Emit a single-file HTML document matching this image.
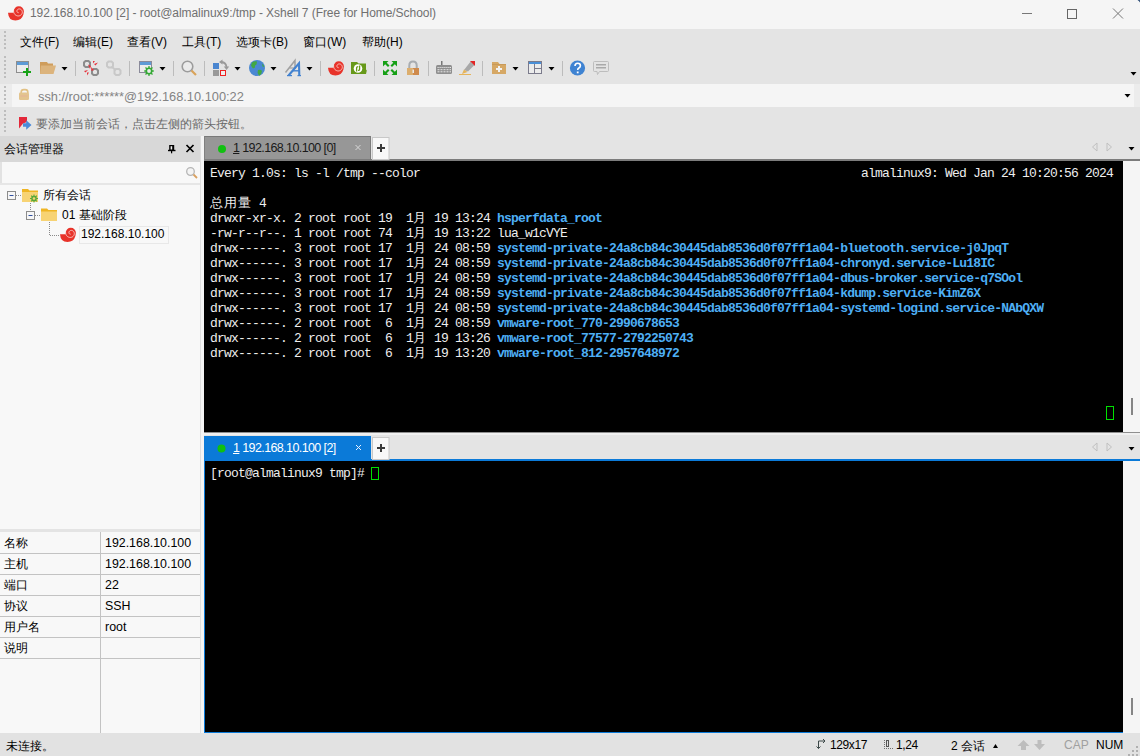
<!DOCTYPE html>
<html><head><meta charset="utf-8">
<style>
*{box-sizing:border-box;margin:0;padding:0}
html,body{width:1140px;height:756px;overflow:hidden;background:#ececec;font-family:"Liberation Sans",sans-serif;font-size:12px;color:#000}
.a{position:absolute}
.ui{font-family:"Liberation Sans",sans-serif;white-space:pre}
.t{font-family:"Liberation Mono",monospace;white-space:pre;color:#eeeeee;font-size:13px;letter-spacing:-0.8px;line-height:15px;margin-top:1px}
.b{color:#4eaff5;font-weight:bold}
.w{display:inline-block;width:14px}
.sep{position:absolute;top:62px;width:1px;height:13px;background:#b4b4b4}
.dd{position:absolute;top:67px;width:0;height:0;border-left:3px solid transparent;border-right:3px solid transparent;border-top:3px solid #000}
</style></head><body>
<svg width="0" height="0" style="position:absolute"><defs><symbol id="sn" viewBox="0 0 16 16">
<path d="M0,7.7 Q0.5,15.5 7.5,15.5 Q13.8,15.3 15.4,9.5 L15.9,6.3 A5.1,5.1 0 0 0 5.7,6.3 L5.5,7.7 Z" fill="#e8332a"/>
<path d="M5.67,5.28 L5.61,5.99 L5.64,6.68 L5.77,7.36 L5.99,8.00 L6.28,8.60 L6.65,9.14 L7.08,9.63 L7.56,10.05 L8.09,10.39 L8.66,10.65 L9.24,10.83 L9.83,10.93 L10.42,10.95 L11.00,10.89 L11.56,10.76 L12.08,10.55 L12.57,10.28 L13.00,9.95 L13.38,9.57 L13.70,9.16 L13.96,8.71 L14.14,8.24 L14.26,7.76 L14.32,7.27 L14.30,6.79 L14.23,6.33 L14.09,5.89 L13.90,5.48 L13.66,5.11 L13.38,4.79 L13.06,4.51 L12.72,4.28 L12.35,4.11 L11.98,3.99 L11.60,3.93 L11.23,3.91 L10.86,3.95 L10.52,4.04 L10.20,4.17 L9.90,4.34 L9.65,4.54 L9.43,4.77 L9.24,5.02 L9.10,5.28 L9.01,5.56 L8.95,5.83 L8.93,6.10 L8.95,6.37 L9.01,6.61 L9.10,6.84 L9.22,7.05 L9.36,7.22 L9.51,7.37 L9.68,7.49 L9.86,7.58 L10.04,7.64 L10.22,7.67 L10.40,7.67 L10.56,7.64 L10.71,7.60" fill="none" stroke="#fbe3e0" stroke-width="0.8"/>
</symbol></defs></svg>

<!-- title bar -->
<div class="a" style="left:0;top:0;width:1140px;height:29px;background:#f5f5f5"></div>
<div class="a ui" style="left:30px;top:6px;font-size:12px;letter-spacing:-0.05px;color:#707070">192.168.10.100 [2] - root@almalinux9:/tmp - Xshell 7 (Free for Home/School)</div>

<!-- menu + toolbar -->
<div class="a" style="left:0;top:29px;width:1140px;height:55px;background:#e4e4e4"></div>
<div class="a ui" style="left:20px;top:34px;font-size:12px">文件(F)</div>
<div class="a ui" style="left:73px;top:34px;font-size:12px">编辑(E)</div>
<div class="a ui" style="left:127px;top:34px;font-size:12px">查看(V)</div>
<div class="a ui" style="left:182px;top:34px;font-size:12px">工具(T)</div>
<div class="a ui" style="left:236px;top:34px;font-size:12px">选项卡(B)</div>
<div class="a ui" style="left:303px;top:34px;font-size:12px">窗口(W)</div>
<div class="a ui" style="left:362px;top:34px;font-size:12px">帮助(H)</div>

<!-- address bar -->
<div class="a" style="left:12px;top:84px;width:1122px;height:23px;background:#f5f5f5"></div>
<div class="a ui" style="left:38px;top:89px;font-size:12.8px;color:#838383">ssh://root:******@192.168.10.100:22</div>

<!-- tip bar -->
<div class="a" style="left:0;top:107px;width:1140px;height:29px;background:#e4e4e4"></div>
<div class="a ui" style="left:36px;top:116px;font-size:12px;color:#6a6a6a">要添加当前会话，点击左侧的箭头按钮。</div>

<!-- toolbar icons -->
<svg class="a" style="left:0;top:29px" width="620" height="107" viewBox="0 29 620 107">
<g fill="#bdbdbd">
<rect x="4" y="31" width="2" height="2"/><rect x="4" y="35" width="2" height="2"/><rect x="4" y="39" width="2" height="2"/><rect x="4" y="43" width="2" height="2"/><rect x="4" y="47" width="2" height="2"/>
<rect x="4" y="56" width="2" height="2"/><rect x="4" y="60" width="2" height="2"/><rect x="4" y="64" width="2" height="2"/><rect x="4" y="68" width="2" height="2"/><rect x="4" y="72" width="2" height="2"/><rect x="4" y="76" width="2" height="2"/>
<rect x="4" y="86" width="2" height="2"/><rect x="4" y="90" width="2" height="2"/><rect x="4" y="94" width="2" height="2"/><rect x="4" y="98" width="2" height="2"/><rect x="4" y="102" width="2" height="2"/>
<rect x="4" y="110" width="2" height="2"/><rect x="4" y="114" width="2" height="2"/><rect x="4" y="118" width="2" height="2"/><rect x="4" y="122" width="2" height="2"/><rect x="4" y="126" width="2" height="2"/><rect x="4" y="130" width="2" height="2"/>
</g>
<!-- separators -->
<g stroke="#bcbcbc" stroke-width="1">
<line x1="75.5" y1="61" x2="75.5" y2="76"/><line x1="129.5" y1="61" x2="129.5" y2="76"/><line x1="173.5" y1="61" x2="173.5" y2="76"/>
<line x1="204.5" y1="61" x2="204.5" y2="76"/><line x1="320.5" y1="61" x2="320.5" y2="76"/><line x1="374.5" y1="61" x2="374.5" y2="76"/>
<line x1="428.5" y1="61" x2="428.5" y2="76"/><line x1="482.5" y1="61" x2="482.5" y2="76"/><line x1="562.5" y1="61" x2="562.5" y2="76"/>
</g>
<!-- dropdown arrows -->
<g fill="#000">
<polygon points="61.5,67 67.5,67 64.5,70.5"/><polygon points="159.5,67 165.5,67 162.5,70.5"/><polygon points="234.5,67 240.5,67 237.5,70.5"/>
<polygon points="270.5,67 276.5,67 273.5,70.5"/><polygon points="306.5,67 312.5,67 309.5,70.5"/><polygon points="512.5,67 518.5,67 515.5,70.5"/>
<polygon points="548.5,67 554.5,67 551.5,70.5"/>
</g>
<!-- 1 new session -->
<rect x="16.5" y="61.5" width="12" height="11" fill="#ececec" stroke="#8e8e8e"/>
<rect x="17" y="62" width="11" height="3" fill="#5e9bd6"/>
<rect x="23" y="71" width="8" height="2" fill="#17a317"/><rect x="26" y="68" width="2" height="8" fill="#17a317"/>
<!-- 2 open folder -->
<path d="M40,62 h7 l1,1.5 h5 v10.5 h-13 z" fill="#cf9d5c"/>
<path d="M41,65.5 h15 l-2.5,8.5 h-13.5 z" fill="#dcb47d"/>
<!-- 5 disconnect -->
<g fill="none" stroke="#8c8c8c" stroke-width="2">
<path d="M85.5,61 h3 l1.5,1.5 v3 l-1.5,1.5 h-3 l-1.5,-1.5 v-3 z"/>
<path d="M93.5,69 h3 l1.5,1.5 v3 l-1.5,1.5 h-3 l-1.5,-1.5 v-3 z"/>
</g>
<g fill="#e5323c">
<path d="M88,64.5 l3,1.5 l-1,3 z"/><path d="M91,67 l3,3 l-2.5,1 z"/>
<path d="M93,61 l2,0 l-2,2.5 z"/><path d="M94,64 l4,-1.5 l-2.5,3 z"/>
<path d="M84,71 l4,-1 l-2.5,2.5 z"/><path d="M87,72.5 l2,0 l-2,3 z"/>
</g>
<!-- 6 reconnect disabled -->
<g fill="none" stroke="#c8c8c8" stroke-width="2">
<path d="M108.5,61.5 h3 l1.5,1.5 v3 l-1.5,1.5 h-3 l-1.5,-1.5 v-3 z"/>
<path d="M116,69 h3 l1.5,1.5 v3 l-1.5,1.5 h-3 l-1.5,-1.5 v-3 z"/>
<line x1="112" y1="67" x2="115.5" y2="70"/>
</g>
<!-- 8 properties -->
<rect x="139.5" y="61.5" width="12" height="11" fill="#ececec" stroke="#8a8a9a"/>
<rect x="140" y="62" width="11" height="3" fill="#5e9bd6"/>
<g transform="translate(149,71)"><path d="M3.53,-0.70 L4.97,-0.59 L4.97,0.59 L3.53,0.70 L2.99,2.00 L3.93,3.10 L3.10,3.93 L2.00,2.99 L0.70,3.53 L0.59,4.97 L-0.59,4.97 L-0.70,3.53 L-2.00,2.99 L-3.10,3.93 L-3.93,3.10 L-2.99,2.00 L-3.53,0.70 L-4.97,0.59 L-4.97,-0.59 L-3.53,-0.70 L-2.99,-2.00 L-3.93,-3.10 L-3.10,-3.93 L-2.00,-2.99 L-0.70,-3.53 L-0.59,-4.97 L0.59,-4.97 L0.70,-3.53 L2.00,-2.99 L3.10,-3.93 L3.93,-3.10 L2.99,-2.00Z" fill="#34a834"/><circle r="1.9" fill="#ececec"/></g>
<!-- 11 search -->
<circle cx="187.5" cy="66.5" r="5.3" fill="#ebebeb" stroke="#9c9c9c" stroke-width="1.6"/>
<line x1="191.5" y1="70.5" x2="196" y2="75" stroke="#d9a35a" stroke-width="2.2"/>
<!-- 13 transfer -->
<rect x="213" y="63" width="6" height="6" fill="#4a86d0"/>
<rect x="213" y="70" width="6" height="6" fill="#999"/>
<rect x="220.5" y="70.5" width="5" height="5" fill="#eee" stroke="#e22" stroke-width="1"/>
<path d="M221.5,62 Q226,62.5 226.5,67" fill="none" stroke="#9a9a9a" stroke-width="1.8"/>
<polygon points="219,62 222.5,59.5 222.5,64.5" fill="#9a9a9a"/><polygon points="223.8,66.5 229.2,66.5 226.5,70" fill="#9a9a9a"/>
<!-- 15 globe -->
<circle cx="257" cy="68" r="8" fill="#4a88d2"/>
<path d="M252,62.5 q3,-2 5,-1 l-0.5,3 q-2,0.5 -1.5,3 l-2,1 q-1.5,-2 -2,-3 z" fill="#43a843"/>
<path d="M258,70 q3,-1 4,1 q0,3 -3,5 q-1,-3 -1.5,-3 z" fill="#43a843"/>
<path d="M262,63.5 q2,1.5 2.5,3.5 l-2,-0.5 z" fill="#43a843"/>
<!-- 17 font -->
<path d="M285.5,72.5 L295,60.5 V69" fill="none" stroke="#a0a0a0" stroke-width="1.5"/>
<line x1="289.5" y1="68" x2="295" y2="68" stroke="#a0a0a0" stroke-width="1.2"/>
<path d="M288.5,75.5 L299,63.3 L299.3,75.5" fill="none" stroke="#4282d0" stroke-width="2.1"/>
<line x1="292.5" y1="70.8" x2="299" y2="70.8" stroke="#4282d0" stroke-width="1.4"/>
<line x1="287" y1="75.6" x2="292" y2="75.6" stroke="#4282d0" stroke-width="1.2"/><line x1="297.5" y1="75.6" x2="301" y2="75.6" stroke="#4282d0" stroke-width="1.2"/>
<!-- 20 snail -->
<use href="#sn" x="328" y="60" width="16" height="16"/>
<!-- 21 xftp -->
<path d="M351,62 h6 l1.5,1.5 h7.5 v7 l1,-1 l-1,4.5 h-15 z" fill="#67991a"/>
<circle cx="358" cy="68.5" r="4.3" fill="#fff"/>
<path d="M356.6,71.5 V67.8 Q356.6,66.6 358.2,66.6 M359.6,65.5 V69.2 Q359.6,70.4 358,70.4" fill="none" stroke="#67991a" stroke-width="1.3"/>
<!-- 23 fullscreen -->
<g fill="#16a016">
<path d="M383,61 h5.5 l-1.8,1.8 l2.8,2.8 l-1.5,1.5 l-2.8,-2.8 l-2.2,2.2 z"/>
<path d="M397,61 h-5.5 l1.8,1.8 l-2.8,2.8 l1.5,1.5 l2.8,-2.8 l2.2,2.2 z"/>
<path d="M383,75 h5.5 l-1.8,-1.8 l2.8,-2.8 l-1.5,-1.5 l-2.8,2.8 l-2.2,-2.2 z"/>
<path d="M397,75 h-5.5 l1.8,-1.8 l-2.8,-2.8 l1.5,-1.5 l2.8,2.8 l2.2,-2.2 z"/>
</g>
<!-- 24 lock -->
<path d="M409.3,68.5 v-3 q0,-4 3.7,-4 q3.7,0 3.7,4 v3" fill="none" stroke="#a8acb0" stroke-width="2"/>
<rect x="407" y="68" width="6" height="7" fill="#dcae6e"/><rect x="413" y="68" width="6" height="7" fill="#cf8a4c"/>
<rect x="412.5" y="69.5" width="1.5" height="3.5" fill="#e8e8e8"/>
<!-- 26 keyboard -->
<rect x="436" y="65" width="16" height="9" rx="1.5" fill="#8e8e8e"/>
<rect x="441" y="61" width="1.5" height="4" fill="#777"/>
<g fill="#e8e8e8">
<rect x="437.5" y="67" width="1.2" height="1"/><rect x="439.5" y="67" width="1.2" height="1"/><rect x="441.5" y="67" width="1.2" height="1"/><rect x="443.5" y="67" width="1.2" height="1"/><rect x="445.5" y="67" width="1.2" height="1"/><rect x="447.5" y="67" width="1.2" height="1"/><rect x="449.5" y="67" width="1.5" height="1"/>
<rect x="437.5" y="69.2" width="2" height="1"/><rect x="440.5" y="69.2" width="2" height="1"/><rect x="443.5" y="69.2" width="2" height="1"/><rect x="446.5" y="69.2" width="2" height="1"/><rect x="449.5" y="69.2" width="1.5" height="1"/>
<rect x="437.5" y="71.3" width="2" height="1"/><rect x="440.5" y="71.3" width="2" height="1"/><rect x="443.5" y="71.3" width="2" height="1"/><rect x="446.5" y="71.3" width="2" height="1"/><rect x="449.5" y="71.3" width="1.5" height="1"/>
</g>
<!-- 27 highlighter -->
<path d="M464,70 l7,-9 l4,3.5 l-7,7 z" fill="#a8a8a8"/>
<path d="M470,61 h5 v5 z" fill="#e32424"/>
<path d="M464,69.5 l3.5,2.5 l-5.5,2 z" fill="#e6b45a"/>
<rect x="459" y="74" width="12" height="1" fill="#e6b45a"/>
<!-- 29 folder plus -->
<path d="M492,62 h6 l1.5,2 h6.5 v10 h-14 z" fill="#d6a865"/>
<rect x="492" y="64" width="14" height="1" fill="#c99a58"/>
<rect x="496" y="68" width="6" height="2" fill="#f2f2f2"/><rect x="498" y="66" width="2" height="6" fill="#f2f2f2"/>
<!-- 31 layout -->
<rect x="528.5" y="61.5" width="13" height="12" fill="#ececec" stroke="#7b7b8c"/>
<rect x="529" y="62" width="12" height="2" fill="#4a90d8"/>
<line x1="534.5" y1="64" x2="534.5" y2="73" stroke="#7b7b8c"/><line x1="535" y1="68.5" x2="541" y2="68.5" stroke="#7b7b8c"/>
<!-- 34 help -->
<circle cx="577.5" cy="68" r="7.6" fill="#3f83d2"/>
<path d="M575,66 q0,-2.7 2.7,-2.7 q2.7,0 2.7,2.5 q0,1.5 -1.5,2.2 q-1.2,0.6 -1.2,2" fill="none" stroke="#fff" stroke-width="1.6"/>
<rect x="576.8" y="71.5" width="1.8" height="1.8" fill="#fff"/>
<!-- 35 chat -->
<path d="M594.5,61.5 h13 q1,0 1,1 v8 q0,1 -1,1 h-8 l-2,3 l-0.5,-3 h-2.5 q-1,0 -1,-1 v-8 q0,-1 1,-1 z" fill="#e3e3e3" stroke="#bdbdbd"/>
<rect x="596" y="64" width="10" height="1.5" fill="#a9a9a9"/><rect x="596" y="67" width="10" height="1.5" fill="#a9a9a9"/>
<!-- address lock -->
<path d="M21.2,93 v-1 q0,-2.4 2.6,-2.4 h1.4 q2.6,0 2.6,2.4 v1" fill="none" stroke="#e2c184" stroke-width="1.6"/>
<rect x="19" y="92.5" width="10" height="7.5" rx="1.2" fill="#e3c48e"/>
<rect x="20.5" y="95.5" width="7" height="1" fill="#eaa8a0" opacity="0.6"/>
<!-- tip icon -->
<path d="M19,117 H27 V122 L23,123.5 L19,128.5 Z" fill="#e3283a"/>
<path d="M23,123.2 H26.2 V120.3 L31.5,125 L26.2,129.7 V126.8 H23 Z" fill="#4a8ad8"/>
</svg>

<svg class="a" style="left:1100px;top:60px" width="40" height="50" viewBox="1100 60 40 50"><polygon points="1130.5,72 1136.5,72 1133.5,75.5" fill="#000"/><polygon points="1124.5,94 1130.5,94 1127.5,97.5" fill="#000"/></svg>
<!-- left panel -->
<div class="a" style="left:0;top:136px;width:200px;height:26px;background:#d8d8d8"></div>
<div class="a ui" style="left:4px;top:141px;font-size:12px">会话管理器</div>
<div class="a" style="left:0;top:162px;width:200px;height:367px;background:#f8f8f8"></div>
<div class="a" style="left:0;top:162px;width:2px;height:22px;background:#e2e2e2"></div><div class="a" style="left:0;top:183px;width:200px;height:2px;background:#e6e6e6"></div>
<div class="a ui" style="left:43px;top:187px;font-size:12px">所有会话</div>
<div class="a ui" style="left:62px;top:207px;font-size:12px">01 基础阶段</div>
<div class="a ui" style="left:81px;top:227px;font-size:12px">192.168.10.100</div>

<div class="a" style="left:0;top:529px;width:200px;height:3px;background:#e4e4e4"></div>
<div class="a" style="left:0;top:532px;width:200px;height:201px;background:#f8f8f8"></div>

<!-- splitter -->
<div class="a" style="left:200px;top:136px;width:1px;height:597px;background:#dedede"></div>
<div class="a" style="left:201px;top:136px;width:3px;height:597px;background:#f4f4f4"></div>

<!-- top pane tab bar -->
<div class="a" style="left:204px;top:136px;width:936px;height:25px;background:#e4e4e4"></div>
<div class="a" style="left:204px;top:136px;width:167px;height:24px;background:#979797;border-top:1px solid #7a7a7a;border-left:1px solid #808080;border-right:1px solid #7c7c7c"></div>
<div class="a" style="left:204px;top:159px;width:936px;height:2px;background:#7c7c7c"></div>
<div class="a" style="left:204px;top:161px;width:919px;height:271px;background:#000"></div>
<div class="a" style="left:1123px;top:161px;width:17px;height:271px;background:#f5f5f5"></div>

<!-- terminal top -->
<div class="a t" style="left:210px;top:165px">Every 1.0s: ls -l /tmp --color</div>
<div class="a t" style="left:861px;top:165px">almalinux9: Wed Jan 24 10:20:56 2024</div>
<div class="a t" style="left:210px;top:195px"><span class="w">总</span><span class="w">用</span><span class="w">量</span> 4</div>
<div class="a t" style="left:210px;top:210px">drwxr-xr-x. 2 root root 19  1<span class="w">月</span> 19 13:24 <span class="b">hsperfdata_root</span></div>
<div class="a t" style="left:210px;top:225px">-rw-r--r--. 1 root root 74  1<span class="w">月</span> 19 13:22 lua_w1cVYE</div>
<div class="a t" style="left:210px;top:240px">drwx------. 3 root root 17  1<span class="w">月</span> 24 08:59 <span class="b">systemd-private-24a8cb84c30445dab8536d0f07ff1a04-bluetooth.service-j0JpqT</span></div>
<div class="a t" style="left:210px;top:255px">drwx------. 3 root root 17  1<span class="w">月</span> 24 08:59 <span class="b">systemd-private-24a8cb84c30445dab8536d0f07ff1a04-chronyd.service-Lu18IC</span></div>
<div class="a t" style="left:210px;top:270px">drwx------. 3 root root 17  1<span class="w">月</span> 24 08:59 <span class="b">systemd-private-24a8cb84c30445dab8536d0f07ff1a04-dbus-broker.service-q7SOol</span></div>
<div class="a t" style="left:210px;top:285px">drwx------. 3 root root 17  1<span class="w">月</span> 24 08:59 <span class="b">systemd-private-24a8cb84c30445dab8536d0f07ff1a04-kdump.service-KimZ6X</span></div>
<div class="a t" style="left:210px;top:300px">drwx------. 3 root root 17  1<span class="w">月</span> 24 08:59 <span class="b">systemd-private-24a8cb84c30445dab8536d0f07ff1a04-systemd-logind.service-NAbQXW</span></div>
<div class="a t" style="left:210px;top:315px">drwx------. 2 root root  6  1<span class="w">月</span> 24 08:59 <span class="b">vmware-root_770-2990678653</span></div>
<div class="a t" style="left:210px;top:330px">drwx------. 2 root root  6  1<span class="w">月</span> 19 13:26 <span class="b">vmware-root_77577-2792250743</span></div>
<div class="a t" style="left:210px;top:345px">drwx------. 2 root root  6  1<span class="w">月</span> 19 13:20 <span class="b">vmware-root_812-2957648972</span></div>
<div class="a" style="left:1106px;top:406px;width:8px;height:14px;border:1px solid #00e000"></div>
<!-- bottom pane -->
<div class="a" style="left:204px;top:432px;width:936px;height:1px;background:#8f8f8f"></div><div class="a" style="left:204px;top:433px;width:936px;height:2px;background:#f0f0f0"></div>
<div class="a" style="left:204px;top:435px;width:936px;height:24px;background:#e4e4e4"></div>
<div class="a" style="left:204px;top:436px;width:167px;height:23px;background:#0b7ad8"></div>
<div class="a" style="left:204px;top:459px;width:936px;height:2px;background:#0b7ad8"></div>
<div class="a" style="left:204px;top:461px;width:919px;height:272px;background:#000;border-left:1px solid #0b7ad8;border-bottom:1px solid #0b7ad8"></div>
<div class="a" style="left:1123px;top:461px;width:17px;height:272px;background:#f5f5f5"></div>

<!-- terminal bottom -->
<div class="a t" style="left:210px;top:465px">[root@almalinux9 tmp]# </div>
<div class="a" style="left:371px;top:467px;width:8px;height:13px;border:1px solid #00e000"></div>

<!-- status bar -->
<div class="a" style="left:0;top:733px;width:1140px;height:23px;background:#e2e2e2"></div>
<div class="a ui" style="left:6px;top:738px;font-size:12px">未连接。</div>

<!-- title icon + controls -->
<svg class="a" style="left:0;top:0" width="1140" height="29" viewBox="0 0 1140 29">
<use href="#sn" x="8" y="5" width="16" height="16"/>
<line x1="1022" y1="13.5" x2="1032" y2="13.5" stroke="#777" stroke-width="1"/>
<rect x="1067.5" y="9.5" width="9" height="9" fill="none" stroke="#666" stroke-width="1"/>
<path d="M1113,8.5 l10,10 M1123,8.5 l-10,10" stroke="#777" stroke-width="1"/>
</svg>

<!-- left panel icons -->
<svg class="a" style="left:0;top:136px" width="204" height="130" viewBox="0 136 204 130">
<rect x="169.2" y="145" width="5" height="5.3" fill="#000"/><rect x="170.6" y="146.2" width="1.6" height="3.4" fill="#f2f2f2"/><rect x="168" y="149.8" width="7.5" height="1.4" fill="#000"/><rect x="171" y="150.5" width="1.2" height="2.8" fill="#000"/>
<path d="M186.5,145 l7,7 M193.5,145 l-7,7" stroke="#000" stroke-width="1.7"/>
<circle cx="190.5" cy="171.5" r="3.8" fill="#f4f4f4" stroke="#b5b5b5" stroke-width="1.3"/>
<line x1="193.5" y1="174.5" x2="197" y2="178" stroke="#d8a060" stroke-width="1.8"/>
<g fill="none" stroke="#8a8a8a" stroke-width="1" stroke-dasharray="1,1">
<line x1="16" y1="195.5" x2="22" y2="195.5"/>
<line x1="30.5" y1="203" x2="30.5" y2="211"/>
<line x1="35" y1="215.5" x2="41" y2="215.5"/>
<line x1="49.5" y1="222" x2="49.5" y2="235"/>
<line x1="50" y1="235.5" x2="60" y2="235.5"/>
</g>
<rect x="7.5" y="191.5" width="8" height="8" fill="#f6f6f6" stroke="#8c8c8c"/>
<line x1="9.5" y1="195.5" x2="13.5" y2="195.5" stroke="#3050a0"/>
<rect x="26.5" y="211.5" width="8" height="8" fill="#f6f6f6" stroke="#8c8c8c"/>
<line x1="28.5" y1="215.5" x2="32.5" y2="215.5" stroke="#3050a0"/>
<path d="M22,189 h6 l1.5,1.5 h8.5 v11.5 h-16 z" fill="#efb524"/>
<rect x="22" y="192" width="16" height="10" fill="#f7d374"/>
<g transform="translate(34,198.5)"><path d="M2.84,-0.57 L3.97,-0.47 L3.97,0.47 L2.84,0.57 L2.41,1.61 L3.14,2.48 L2.48,3.14 L1.61,2.41 L0.57,2.84 L0.47,3.97 L-0.47,3.97 L-0.57,2.84 L-1.61,2.41 L-2.48,3.14 L-3.14,2.48 L-2.41,1.61 L-2.84,0.57 L-3.97,0.47 L-3.97,-0.47 L-2.84,-0.57 L-2.41,-1.61 L-3.14,-2.48 L-2.48,-3.14 L-1.61,-2.41 L-0.57,-2.84 L-0.47,-3.97 L0.47,-3.97 L0.57,-2.84 L1.61,-2.41 L2.48,-3.14 L3.14,-2.48 L2.41,-1.61Z" fill="#58a83a"/><circle r="1.3" fill="#f7d374"/></g>
<path d="M41,208.5 h6 l1.5,1.5 h8.5 v11 h-16 z" fill="#efb524"/>
<rect x="41" y="211.5" width="16" height="9.5" fill="#f7d374"/>
<use href="#sn" x="60" y="226.5" width="16" height="16"/>
<rect x="79.5" y="226.5" width="89" height="17" fill="none" stroke="#d8d8d8" stroke-dasharray="1,1"/>
</svg>

<!-- properties grid -->
<svg class="a" style="left:0;top:532px" width="200" height="201" viewBox="0 532 200 201">
<g stroke="#c3c3c3" stroke-width="1">
<line x1="100.5" y1="532" x2="100.5" y2="733"/>
<line x1="0" y1="553.5" x2="200" y2="553.5"/><line x1="0" y1="574.5" x2="200" y2="574.5"/><line x1="0" y1="595.5" x2="200" y2="595.5"/>
<line x1="0" y1="616.5" x2="200" y2="616.5"/><line x1="0" y1="637.5" x2="200" y2="637.5"/><line x1="0" y1="658.5" x2="200" y2="658.5"/>
</g>
</svg>
<div class="a ui" style="left:4px;top:535px">名称</div><div class="a ui" style="left:105px;top:536px;font-size:12.4px">192.168.10.100</div>
<div class="a ui" style="left:4px;top:556px">主机</div><div class="a ui" style="left:105px;top:557px;font-size:12.4px">192.168.10.100</div>
<div class="a ui" style="left:4px;top:577px">端口</div><div class="a ui" style="left:105px;top:578px;font-size:12.4px">22</div>
<div class="a ui" style="left:4px;top:598px">协议</div><div class="a ui" style="left:105px;top:599px;font-size:12.4px">SSH</div>
<div class="a ui" style="left:4px;top:619px">用户名</div><div class="a ui" style="left:105px;top:620px;font-size:12.4px">root</div>
<div class="a ui" style="left:4px;top:640px">说明</div>

<!-- tabs -->
<svg class="a" style="left:204px;top:136px" width="936" height="326" viewBox="204 136 936 326">
<circle cx="222" cy="149" r="4" fill="#10c010"/>
<path d="M355.5,145 l5,5 M360.5,145 l-5,5" stroke="#d8d8d8" stroke-width="1"/>
<rect x="372.5" y="137.5" width="16.5" height="22" fill="#f8f8f8" stroke="#c8c8c8"/>
<path d="M377,148 h8 M381,144 v8" stroke="#3a3a3a" stroke-width="2"/>
<path d="M1097,143 v8 l-4.5,-4 z" fill="none" stroke="#c0c0c0"/>
<path d="M1107,143 v8 l4.5,-4 z" fill="none" stroke="#c0c0c0"/>
<polygon points="1128.5,147 1134.5,147 1131.5,150.5" fill="#000"/>
<circle cx="221.5" cy="448.5" r="4" fill="#10c010"/>
<path d="M356,445 l5,5 M361,445 l-5,5" stroke="#e8f0ff" stroke-width="1"/>
<rect x="372.5" y="437.5" width="16.5" height="22" fill="#f8f8f8" stroke="#c8c8c8"/>
<path d="M377,448 h8 M381,444 v8" stroke="#3a3a3a" stroke-width="2"/>
<path d="M1097,443 v8 l-4.5,-4 z" fill="none" stroke="#c0c0c0"/>
<path d="M1107,443 v8 l4.5,-4 z" fill="none" stroke="#c0c0c0"/>
<polygon points="1128.5,447 1134.5,447 1131.5,450.5" fill="#000"/>
</svg>
<div class="a ui" style="left:233px;top:141px;font-size:12.5px;letter-spacing:-0.6px;color:#1a1a1a"><u>1</u> 192.168.10.100 [0]</div>
<div class="a ui" style="left:233px;top:441px;font-size:12.5px;letter-spacing:-0.6px;color:#fff"><u>1</u> 192.168.10.100 [2]</div>
<div class="a" style="left:1131px;top:398px;width:2px;height:17px;background:#858585"></div>
<div class="a" style="left:1131px;top:698px;width:2px;height:17px;background:#858585"></div>

<!-- status items -->
<svg class="a" style="left:800px;top:733px" width="340" height="23" viewBox="800 733 340 23">
<path d="M818.5,741 V748.5 M816.5,746.5 l2,2 l2,-2 M818.5,741 H825 M823,739 l2,2 l-2,2" stroke="#3c4848" stroke-width="1" fill="none"/>
<g fill="#707070"><rect x="884" y="740" width="1" height="1"/><rect x="884" y="742" width="1" height="1"/><rect x="884" y="744" width="1" height="1"/><rect x="884" y="746" width="1" height="1"/><rect x="884" y="748" width="1" height="1"/><rect x="886" y="748" width="1" height="1"/><rect x="888" y="748" width="1" height="1"/><rect x="890" y="748" width="1" height="1"/><rect x="892" y="748" width="1" height="1"/></g>
<rect x="886.5" y="740.5" width="2" height="6" fill="none" stroke="#555" stroke-width="1"/>
<polygon points="993,748 998,748 995.5,744" fill="#000"/>
<path d="M1017.5,746 l6,-6 l6,6 h-3.5 v4 h-5 v-4 z" fill="#bdbdbd"/>
<path d="M1034,744 l5.5,6 l5.5,-6 h-3.5 v-4 h-4 v4 z" fill="#bdbdbd"/>
<g fill="#b0b0b0"><rect x="1136" y="746" width="2" height="2"/><rect x="1132" y="750" width="2" height="2"/><rect x="1136" y="750" width="2" height="2"/><rect x="1128" y="754" width="2" height="2"/><rect x="1132" y="754" width="2" height="2"/><rect x="1136" y="754" width="2" height="2"/></g>
</svg>
<div class="a ui" style="left:830px;top:738px;letter-spacing:-0.4px">129x17</div>
<div class="a ui" style="left:896px;top:738px;letter-spacing:-0.4px">1,24</div>
<div class="a ui" style="left:951px;top:738px">2 会话</div>
<div class="a ui" style="left:1064px;top:738px;color:#a0a0a0">CAP</div>
<div class="a ui" style="left:1096px;top:738px">NUM</div>

<div class="a" style="left:1137px;top:0;width:3px;height:3px;background:radial-gradient(circle at 0 100%, transparent 2.5px, #3c5a80 3px)"></div>
</body></html>
